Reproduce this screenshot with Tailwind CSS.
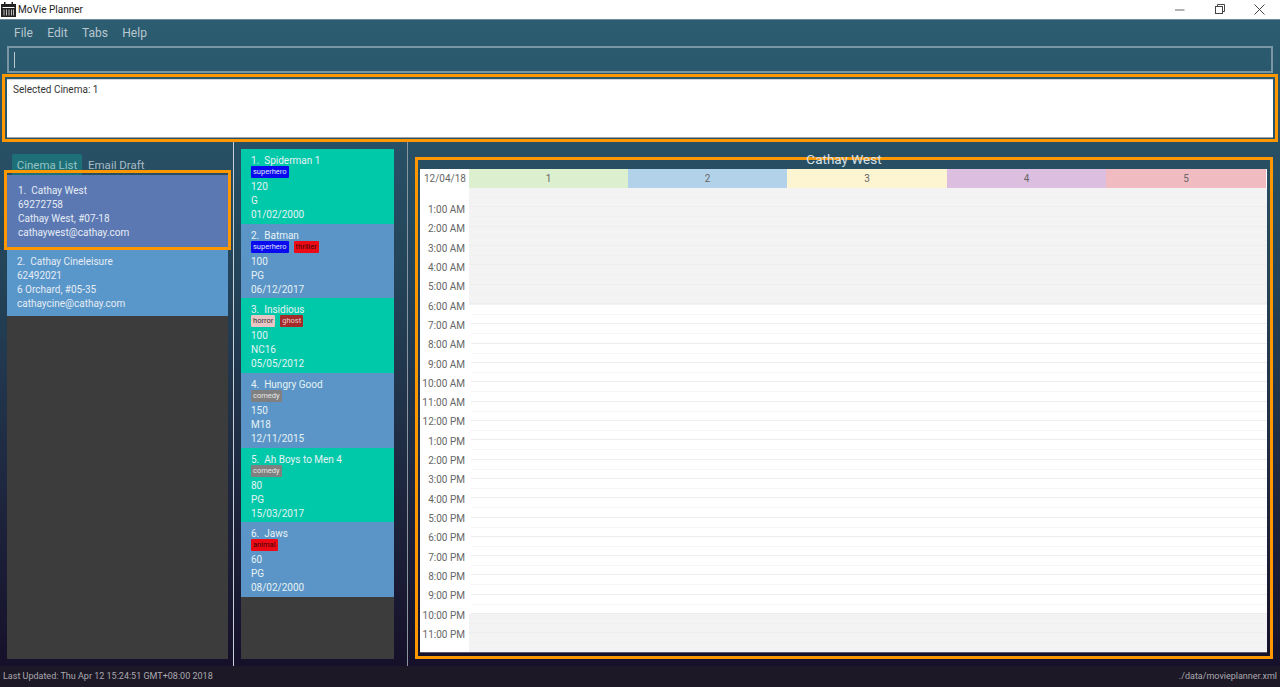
<!DOCTYPE html>
<html>
<head>
<meta charset="utf-8">
<script src="https://cdn.jsdelivr.net/npm/@tailwindcss/browser@4"></script>
</head>
<body class="overflow-hidden">
<div class="w-[1280px] h-[687px] flex flex-col overflow-hidden font-['Roboto','Noto_Sans',sans-serif]">
  <!-- title bar -->
  <div class="h-[19px] shrink-0 bg-white flex items-center text-[10px] text-[#222]">
    <svg class="ml-[1px] w-[15px] h-[15px]" viewBox="0 0 15 15"><path d="M0 2h15v13H0z" fill="#222"/><path d="M3 0h1.500v3H3zM10.500 0H12v3h-1.500z" fill="#222"/><path d="M1.500 5h12v1h-12z" fill="#fff"/><path d="M2.500 7.500h1v6h-1zM5 7.500h1v6H5zM7.500 7.500h1v6h-1zM10 7.500h1v6h-1zM12 7.500h1v6h-1z" fill="#bbb"/></svg>
    <span class="ml-[2px]">MoVie Planner</span>
    <div class="ml-auto flex items-center">
      <svg class="w-[10px] h-[10px] mr-[29px]" viewBox="0 0 10 10"><path d="M0 5h9.500" stroke="#888" stroke-width="1.300"/></svg>
      <svg class="w-[11px] h-[11px] mr-[29px]" viewBox="0 0 11 11" fill="none" stroke="#444"><rect x="1.500" y="2.500" width="7" height="7"/><path d="M3.500 2.500V.500h7v7h-2"/></svg>
      <svg class="w-[11px] h-[11px] mr-[15px]" viewBox="0 0 11 11" fill="none" stroke="#444"><path d="M.5.500l10 10M10.500.500l-10 10"/></svg>
    </div>
  </div>

  <div class="flex-1 min-h-0 flex flex-col bg-gradient-to-b from-[#2c5d71] via-[#234358] via-40% to-[#16102a] border-t border-[#6b8d9b]">
    <!-- menu -->
    <div class="h-[25px] mb-px shrink-0 flex items-center pl-[14px] gap-[14.400px] text-[12px] text-[#b9c8cf]">
      <span>File</span><span>Edit</span><span>Tabs</span><span>Help</span>
    </div>
    <!-- command box -->
    <div class="h-[27px] shrink-0 mx-[7px] border-2 border-[#7996a3] flex items-center pl-[5px]">
      <div class="w-px h-[16px] bg-[#b8c8cf]"></div>
    </div>
    <!-- result -->
    <div class="h-[68px] shrink-0 mx-[2px] mt-px border-[3px] border-[#ff9800] pt-[2px] px-[2px] pb-px">
      <div class="h-full bg-white border-t border-[#d6d6d6] border-b border-b-[#9aa7ad] pl-[6px] pt-[2px] text-[10px] leading-[16px] text-[#333]">Selected Cinema: 1</div>
    </div>

    <div class="flex-1 min-h-0 flex">
      <!-- cinemas -->
      <div class="w-[234px] shrink-0 border-r border-[#c9d1d6] flex flex-col pl-[7px] pr-[5px] pb-[7px]">
        <div class="h-[21px] mt-[12px] flex text-[11.5px] leading-[22px] shrink-0">
          <span class="ml-[5px] w-[70px] text-center bg-[#1d7078] text-[#97c3c4] rounded-t-[2px]">Cinema List</span>
          <span class="ml-[6px] text-[#a9bcc5]">Email Draft</span>
        </div>
        <div class="flex-1 min-h-0 bg-[#3c3c3c] text-[10px] leading-[14.100px] text-[#e6edf5]">
          <div class="relative h-[72px] bg-[#5b78b3] pt-[9px] pl-[11px]">
            <p>1.&nbsp; Cathay West</p><p>69272758</p><p>Cathay West, #07-18</p><p>cathaywest@cathay.com</p>
            <div class="absolute left-[-3px] right-[-3px] top-[-5px] bottom-[-3px] border-[3px] border-[#ff9800]"></div>
          </div>
          <div class="h-[69px] bg-[#5996c9] pt-[8px] pl-[10px]">
            <p>2.&nbsp; Cathay Cineleisure</p><p>62492021</p><p>6 Orchard, #05-35</p><p>cathaycine@cathay.com</p>
          </div>
        </div>
      </div>

      <!-- movies -->
      <div class="w-[174px] shrink-0 border-r border-[#8b96a3] pl-[7px] pr-[13px] pt-[7px] pb-[7px]">
        <div class="h-full bg-[#3c3c3c] text-[10px] leading-[14px] text-[#e6f2f5]">
          <div class="h-[74.670px] bg-[#00c9a9] pt-[5px] pl-[10px]">
            <p>1.&nbsp; Spiderman 1</p>
            <div class="flex gap-[5px] h-[12px] -mt-[2px] mb-[2px]"><span class="h-[12px] px-[2px] bg-[#0a0aee] rounded-[1px] text-[7.5px] leading-[12px] text-[#dfe3ff]">superhero</span></div>
            <p>120</p><p>G</p><p>01/02/2000</p>
          </div>
          <div class="h-[74.670px] bg-[#5b95c7] pt-[5px] pl-[10px]">
            <p>2.&nbsp; Batman</p>
            <div class="flex gap-[5px] h-[12px] -mt-[2px] mb-[2px]"><span class="h-[12px] px-[2px] bg-[#0a0aee] rounded-[1px] text-[7.5px] leading-[12px] text-[#dfe3ff]">superhero</span><span class="h-[12px] px-[2px] bg-[#ee0a14] rounded-[1px] text-[7.5px] leading-[12px] text-[#3b0508]">thriller</span></div>
            <p>100</p><p>PG</p><p>06/12/2017</p>
          </div>
          <div class="h-[74.670px] bg-[#00c9a9] pt-[5px] pl-[10px]">
            <p>3.&nbsp; Insidious</p>
            <div class="flex gap-[5px] h-[12px] -mt-[2px] mb-[2px]"><span class="h-[12px] px-[2px] bg-[#e8c4c4] rounded-[1px] text-[7.5px] leading-[12px] text-[#333]">horror</span><span class="h-[12px] px-[2px] bg-[#a52a2a] rounded-[1px] text-[7.5px] leading-[12px] text-[#e8cccc]">ghost</span></div>
            <p>100</p><p>NC16</p><p>05/05/2012</p>
          </div>
          <div class="h-[74.670px] bg-[#5b95c7] pt-[5px] pl-[10px]">
            <p>4.&nbsp; Hungry Good</p>
            <div class="flex gap-[5px] h-[12px] -mt-[2px] mb-[2px]"><span class="h-[12px] px-[2px] bg-[#808080] rounded-[1px] text-[7.5px] leading-[12px] text-[#e6e6e6]">comedy</span></div>
            <p>150</p><p>M18</p><p>12/11/2015</p>
          </div>
          <div class="h-[74.670px] bg-[#00c9a9] pt-[5px] pl-[10px]">
            <p>5.&nbsp; Ah Boys to Men 4</p>
            <div class="flex gap-[5px] h-[12px] -mt-[2px] mb-[2px]"><span class="h-[12px] px-[2px] bg-[#808080] rounded-[1px] text-[7.5px] leading-[12px] text-[#e6e6e6]">comedy</span></div>
            <p>80</p><p>PG</p><p>15/03/2017</p>
          </div>
          <div class="h-[74.670px] bg-[#5b95c7] pt-[5px] pl-[10px]">
            <p>6.&nbsp; Jaws</p>
            <div class="flex gap-[5px] h-[12px] -mt-[2px] mb-[2px]"><span class="h-[12px] px-[2px] bg-[#ee0a14] rounded-[1px] text-[7.5px] leading-[12px] text-[#3b0508]">animal</span></div>
            <p>60</p><p>PG</p><p>08/02/2000</p>
          </div>
        </div>
      </div>

      <!-- calendar -->
      <div class="flex-1 min-w-0 pl-[7px] pr-[7px] pt-[15px] pb-[7px]">
        <div class="relative h-full border-[3px] border-[#ff9800] pl-[2px] pr-[3px] pt-[9px] pb-[3px]">
          <div class="absolute top-[-9px] left-0 right-0 text-center text-[13.5px] leading-[16px] text-[#d8e0e4]">Cathay West</div>
          <div class="h-full bg-white flex flex-col border-b border-[#5b5870] text-[10px] text-[#666]">
            <div class="h-[19px] shrink-0 flex leading-[19px] text-center">
              <div class="w-[49px] pl-[1px]">12/04/18</div>
              <div class="w-[159px] bg-[#dcefcf]">1</div>
              <div class="w-[159px] bg-[#b2d2e9]">2</div>
              <div class="w-[160px] bg-[#fdf4d2]">3</div>
              <div class="w-[159px] bg-[#dcbfe0]">4</div>
              <div class="w-[160px] bg-[#f0bcc2]">5</div>
            </div>
            <div class="flex-1 min-h-0 flex">
              <!-- hours -->
              <div class="w-[49px] shrink-0 pt-[12px] pr-[4px] text-right leading-[19.320px]">
                <p>1:00 AM</p><p>2:00 AM</p><p>3:00 AM</p><p>4:00 AM</p><p>5:00 AM</p><p>6:00 AM</p><p>7:00 AM</p><p>8:00 AM</p><p>9:00 AM</p><p>10:00 AM</p><p>11:00 AM</p><p>12:00 PM</p><p>1:00 PM</p><p>2:00 PM</p><p>3:00 PM</p><p>4:00 PM</p><p>5:00 PM</p><p>6:00 PM</p><p>7:00 PM</p><p>8:00 PM</p><p>9:00 PM</p><p>10:00 PM</p><p>11:00 PM</p>
              </div>
              <!-- grid -->
              <div class="flex-1 min-w-0 flex flex-col">
                <div class="h-[116.500px] shrink-0 bg-[#f3f3f3] bg-[repeating-linear-gradient(to_bottom,transparent_0,transparent_9px,#f0f0f0_9px,#f0f0f0_10px,transparent_10px,transparent_18.320px,#ededed_18.320px,#ededed_19.320px)]"></div>
                <div class="h-[309.100px] shrink-0 ml-[2px] bg-white bg-[repeating-linear-gradient(to_bottom,transparent_0,transparent_9px,#f5f5f5_9px,#f5f5f5_10px,transparent_10px,transparent_18.320px,#ededed_18.320px,#ededed_19.320px)]"></div>
                <div class="flex-1 min-h-0 bg-[#f3f3f3] bg-[repeating-linear-gradient(to_bottom,transparent_0,transparent_9px,#f0f0f0_9px,#f0f0f0_10px,transparent_10px,transparent_18.320px,#ededed_18.320px,#ededed_19.320px)]"></div>
              </div>
            </div>
          </div>
        </div>
      </div>
    </div>
  </div>

  <!-- footer -->
  <div class="h-[21px] shrink-0 bg-[#1d1826] flex items-center justify-between px-[3px] text-[9px] text-[#a9a9ae]">
    <span>Last Updated: Thu Apr 12 15:24:51 GMT+08:00 2018</span>
    <span>./data/movieplanner.xml</span>
  </div>
</div>
</body>
</html>
